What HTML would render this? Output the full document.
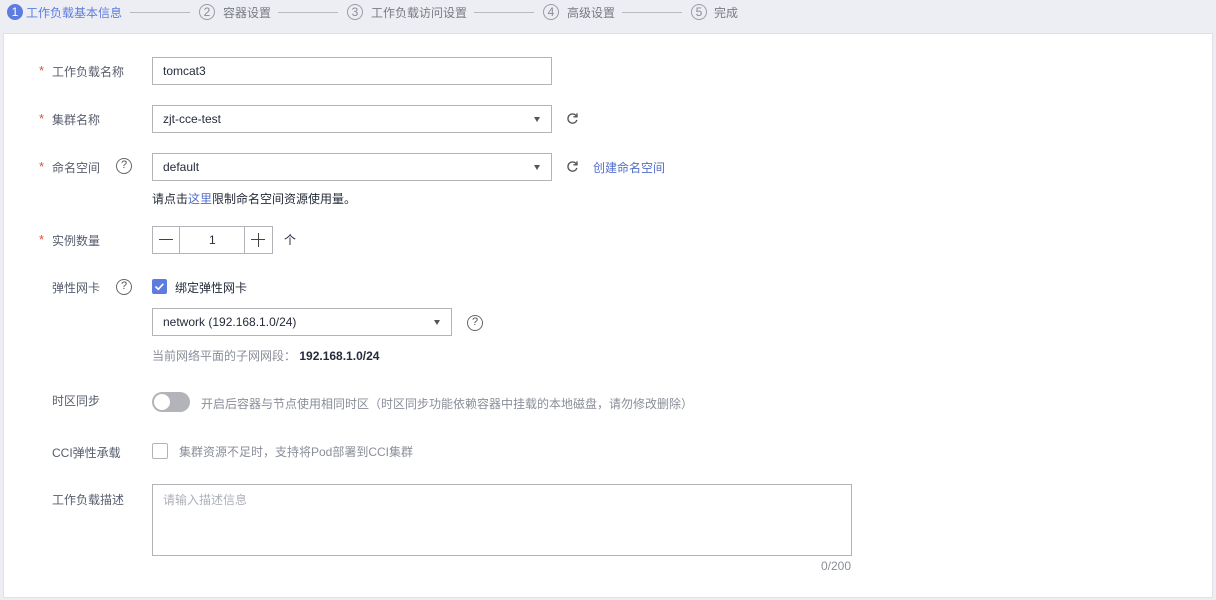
<!DOCTYPE html>
<html><head><meta charset="utf-8"><style>
*{margin:0;padding:0;box-sizing:border-box}
body{width:1216px;height:600px;background:#eceef3;font-family:"Liberation Sans","Noto Sans CJK SC",sans-serif;font-size:12px;color:#252b3a;position:relative;overflow:hidden}
.a{position:absolute;white-space:nowrap}
.circ{position:absolute;width:16px;height:16px;border-radius:50%;border:1px solid #9a9ca3;color:#8a8c93;font-size:12px;text-align:center;line-height:14px;top:4px}
.st{color:#787b82;top:4px}
.ln{position:absolute;top:12px;height:1px;background:#b8bac0}
.card{position:absolute;left:3px;top:33px;width:1210px;height:565px;background:#fff;border:1px solid #dfe1e6}
.lab{color:#575d6c}
.star{position:absolute;color:#e84c3d;font-size:13px}
.inp{position:absolute;border:1px solid #b2b4ba;background:#fff;height:28px;padding-left:10px;line-height:26px;color:#252b3a}
.arr{position:absolute;right:11px;top:11px;width:0;height:0;border-left:3.5px solid transparent;border-right:3.5px solid transparent;border-top:5px solid #555}
.q{position:absolute;width:16px;height:16px;border-radius:50%;border:1.3px solid #666;text-align:center;font-size:11px;line-height:13px;color:#555}
.ref{position:absolute}
</style></head><body>
<div class="circ" style="left:7px;background:#5e7ce0;border-color:#5e7ce0;color:#fff">1</div>
<div class="a st" style="left:26px;color:#5e7ce0">工作负载基本信息</div>
<div class="ln" style="left:130px;width:60px"></div>
<div class="circ" style="left:199px">2</div>
<div class="a st" style="left:223px">容器设置</div>
<div class="ln" style="left:278px;width:60px"></div>
<div class="circ" style="left:347px">3</div>
<div class="a st" style="left:371px">工作负载访问设置</div>
<div class="ln" style="left:474px;width:60px"></div>
<div class="circ" style="left:543px">4</div>
<div class="a st" style="left:567px">高级设置</div>
<div class="ln" style="left:622px;width:60px"></div>
<div class="circ" style="left:691px">5</div>
<div class="a st" style="left:714px">完成</div>
<div class="card"></div>

<div class="star a" style="left:39px;top:63px">*</div>
<div class="a lab" style="left:52px;top:63px">工作负载名称</div>
<div class="inp" style="left:152px;top:57px;width:400px">tomcat3</div>

<div class="star a" style="left:39px;top:111px">*</div>
<div class="a lab" style="left:52px;top:111px">集群名称</div>
<div class="inp" style="left:152px;top:105px;width:400px">zjt-cce-test<div class="arr"></div></div>
<svg class="ref" style="left:566px;top:112px" width="13" height="13" viewBox="0 0 13 13"><path d="M10.5 4.2A4.6 4.6 0 1 0 10.9 8" stroke="#555" stroke-width="1.3" fill="none"/><path d="M11 1.2v3.6H7.4" stroke="#555" stroke-width="1.3" fill="none"/></svg>

<div class="star a" style="left:39px;top:159px">*</div>
<div class="a lab" style="left:52px;top:159px">命名空间</div>
<div class="q" style="left:116px;top:158px">?</div>
<div class="inp" style="left:152px;top:153px;width:400px">default<div class="arr"></div></div>
<svg class="ref" style="left:566px;top:160px" width="13" height="13" viewBox="0 0 13 13"><path d="M10.5 4.2A4.6 4.6 0 1 0 10.9 8" stroke="#555" stroke-width="1.3" fill="none"/><path d="M11 1.2v3.6H7.4" stroke="#555" stroke-width="1.3" fill="none"/></svg>
<div class="a" style="left:593px;top:159px;color:#526ecc">创建命名空间</div>
<div class="a" style="left:152px;top:190px">请点击<span style="color:#526ecc">这里</span>限制命名空间资源使用量。</div>

<div class="star a" style="left:39px;top:232px">*</div>
<div class="a lab" style="left:52px;top:232px">实例数量</div>
<div style="position:absolute;left:152px;top:226px;width:121px;height:28px;border:1px solid #b2b4ba">
<div style="position:absolute;left:26px;top:0;width:1px;height:26px;background:#b2b4ba"></div>
<div style="position:absolute;left:91px;top:0;width:1px;height:26px;background:#b2b4ba"></div>
<div style="position:absolute;left:6px;top:12px;width:14px;height:1.3px;background:#444"></div>
<div style="position:absolute;left:98px;top:12px;width:14px;height:1.3px;background:#444"></div>
<div style="position:absolute;left:104.5px;top:5.5px;width:1.3px;height:14px;background:#444"></div>
<div class="a" style="left:56px;top:6px">1</div></div>
<div class="a" style="left:284px;top:231px">个</div>

<div class="a lab" style="left:52px;top:279px">弹性网卡</div>
<div class="q" style="left:116px;top:279px">?</div>
<div style="position:absolute;left:152px;top:279px;width:15px;height:15px;background:#5e7ce0;border-radius:2px">
<svg width="15" height="15"><path d="M3.5 7.5l2.8 2.8 5-5.5" stroke="#fff" stroke-width="1.6" fill="none"/></svg></div>
<div class="a" style="left:175px;top:279px">绑定弹性网卡</div>
<div class="inp" style="left:152px;top:308px;width:300px">network (192.168.1.0/24)<div class="arr"></div></div>
<div class="q" style="left:467px;top:315px">?</div>
<div class="a" style="left:152px;top:347px;color:#8a8e99">当前网络平面的子网网段：&nbsp;<b style="color:#252b3a">192.168.1.0/24</b></div>

<div class="a lab" style="left:52px;top:392px">时区同步</div>
<div style="position:absolute;left:152px;top:392px;width:38px;height:20px;border-radius:10px;background:#b2b4ba">
<div style="position:absolute;left:2px;top:2px;width:16px;height:16px;border-radius:50%;background:#fff"></div></div>
<div class="a" style="left:201px;top:395px;color:#8a8e99">开启后容器与节点使用相同时区（时区同步功能依赖容器中挂载的本地磁盘，请勿修改删除）</div>

<div class="a lab" style="left:52px;top:444px">CCI弹性承载</div>
<div style="position:absolute;left:152px;top:443px;width:16px;height:16px;border:1px solid #b2b4ba;border-radius:2px"></div>
<div class="a" style="left:179px;top:443px;color:#8a8e99">集群资源不足时，支持将Pod部署到CCI集群</div>

<div class="a lab" style="left:52px;top:491px">工作负载描述</div>
<div style="position:absolute;left:152px;top:484px;width:700px;height:72px;border:1px solid #b2b4ba"></div>
<div class="a" style="left:163px;top:491px;color:#adb0b8">请输入描述信息</div>
<div class="a" style="left:821px;top:559px;color:#8a8e99">0/200</div>
</body></html>
